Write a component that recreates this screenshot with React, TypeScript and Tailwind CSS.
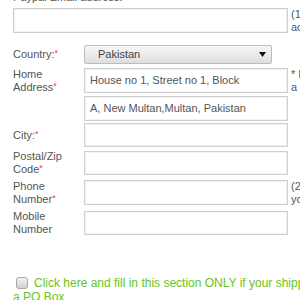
import React from 'react';

const inputCls = 'w-[204px] border border-[#cfcfcf] bg-white shadow-[inset_0_0_0_1px_#f1f1f1] px-[5px] text-[11px] leading-[23px] text-[#555] flex items-center';

function Star() {
  return <span className="text-[#f33] text-[9px] align-top relative top-[-1px]">*</span>;
}

function Row({
  label,
  required,
  className,
  height = 25,
  value,
  side,
}: {
  label?: React.ReactNode;
  required?: boolean;
  className?: string;
  height?: number;
  value?: string;
  side?: React.ReactNode;
}) {
  return (
    <div className={`flex items-start ${className ?? ''}`} style={{ height }}>
      <div className="w-[71px] pr-[4px] h-full flex items-center">
        <div>
          {label}
          {required && <Star />}
        </div>
      </div>
      <div className={inputCls} style={{ height }}>
        {value}
      </div>
      {side && <div className="ml-[3px] w-[160px] text-[#555]">{side}</div>}
    </div>
  );
}

export default function App() {
  return (
    <div className="w-[300px] h-[300px] overflow-hidden bg-white font-['Liberation_Sans',Arial,sans-serif] text-[11px] leading-[13px] text-[#555]">
      <div className="w-[600px] pl-[13px]">
        <div className="-mt-[9px] h-[13px]">Paypal Email address:</div>

        <div className="mt-[4px] flex items-start">
          <div className="h-[25px] w-[275px] border border-[#cfcfcf] bg-white shadow-[inset_0_0_0_1px_#f1f1f1]" />
          <div className="ml-[3px] w-[160px]">
            (1) Required for payments
            <br />
            account
          </div>
        </div>

        {/* Country select */}
        <div className="mt-[11px] flex items-center">
          <div className="w-[71px]">
            Country:
            <Star />
          </div>
          <div className="h-[19px] w-[188px] rounded-[2px] border border-[#bdbdbd] bg-gradient-to-b from-[#f7f7f7] to-[#dedede] flex items-center justify-between pl-[13px] pr-[5px] text-[#444]">
            <span>Pakistan</span>
            <svg width="7" height="5" viewBox="0 0 7 5">
              <polygon points="0,0 7,0 3.5,5" fill="#111" />
            </svg>
          </div>
        </div>

        <Row
          className="mt-[4px]"
          label={<>Home Address</>}
          required
          value="House no 1, Street no 1, Block"
          side={
            <>
              * It must be a valid
              <br />
              a street address
            </>
          }
        />
        <Row className="mt-[3px]" value="A, New Multan,Multan, Pakistan" />
        <Row className="mt-[2px]" height={24} label="City:" required />
        <Row className="mt-[4px]" height={24} label="Postal/Zip Code" required />
        <Row
          className="mt-[5px]"
          label="Phone Number"
          required
          side={
            <>
              (2) Include country code
              <br />
              your number
            </>
          }
        />
        <Row className="mt-[6px]" height={24} label="Mobile Number" />

        <div className="mt-[41px] text-[12px] leading-[14px] text-[#66c522]">
          <div className="whitespace-nowrap flex items-center">
            <span className="ml-[3px] mr-[6px] inline-block h-[12px] w-[12px] rounded-[3px] border border-[#a8a8a8] bg-gradient-to-b from-[#f4f4f4] to-[#d0d0d0]" />
            Click here and fill in this section ONLY if your shipping address is different or is
          </div>
          <div>a PO Box</div>
        </div>
      </div>
    </div>
  );
}
